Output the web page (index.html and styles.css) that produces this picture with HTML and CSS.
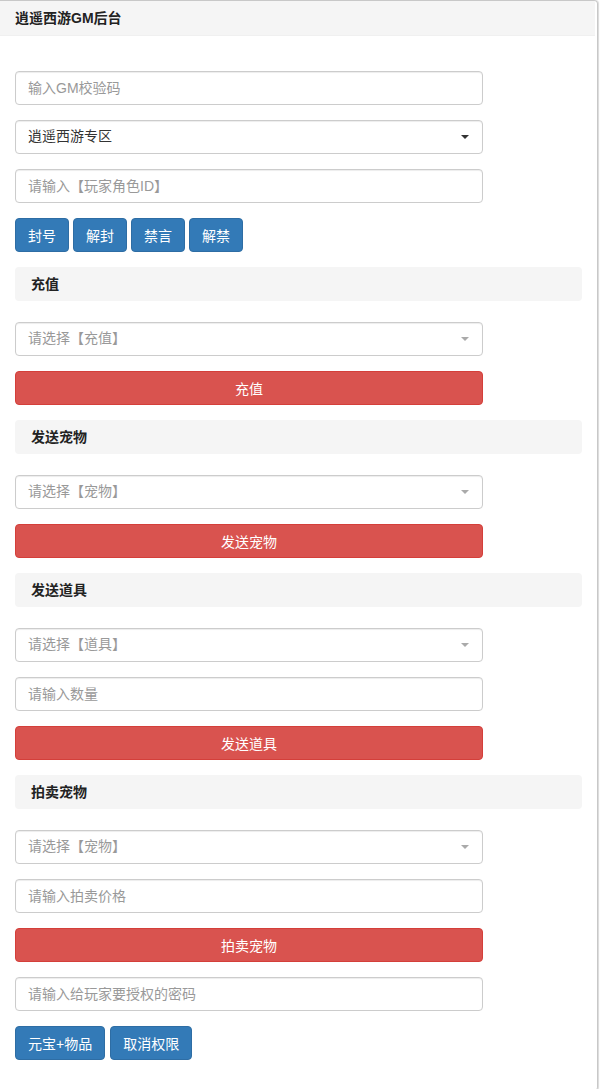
FILE: index.html
```html
<!DOCTYPE html>
<html lang="zh-CN">
<head>
  <meta charset="UTF-8">
  <meta name="viewport" content="width=device-width, initial-scale=1.0">
  <title>逍遥西游GM后台</title>
  <link rel="stylesheet" href="styles.css">
</head>
<body>
  <div class="panel">
    <div class="panel-heading">逍遥西游GM后台</div>
    <div class="panel-body">
      <form class="gm-form">
        <div class="form-group">
          <input type="text" class="form-control" placeholder="输入GM校验码">
        </div>
        <div class="form-group">
          <div class="form-control select">
            <span>逍遥西游专区</span>
            <span class="caret"></span>
          </div>
        </div>
        <div class="form-group">
          <input type="text" class="form-control" placeholder="请输入【玩家角色ID】">
        </div>
        <div class="form-group btn-row">
          <button type="button" class="btn btn-primary">封号</button>
          <button type="button" class="btn btn-primary">解封</button>
          <button type="button" class="btn btn-primary">禁言</button>
          <button type="button" class="btn btn-primary">解禁</button>
        </div>

        <div class="section-title">充值</div>
        <div class="form-group">
          <div class="form-control select empty">
            <span>请选择【充值】</span>
            <span class="caret"></span>
          </div>
        </div>
        <div class="form-group">
          <button type="button" class="btn btn-danger btn-block">充值</button>
        </div>

        <div class="section-title">发送宠物</div>
        <div class="form-group">
          <div class="form-control select empty">
            <span>请选择【宠物】</span>
            <span class="caret"></span>
          </div>
        </div>
        <div class="form-group">
          <button type="button" class="btn btn-danger btn-block">发送宠物</button>
        </div>

        <div class="section-title">发送道具</div>
        <div class="form-group">
          <div class="form-control select empty">
            <span>请选择【道具】</span>
            <span class="caret"></span>
          </div>
        </div>
        <div class="form-group">
          <input type="text" class="form-control" placeholder="请输入数量">
        </div>
        <div class="form-group">
          <button type="button" class="btn btn-danger btn-block">发送道具</button>
        </div>

        <div class="section-title">拍卖宠物</div>
        <div class="form-group">
          <div class="form-control select empty">
            <span>请选择【宠物】</span>
            <span class="caret"></span>
          </div>
        </div>
        <div class="form-group">
          <input type="text" class="form-control" placeholder="请输入拍卖价格">
        </div>
        <div class="form-group">
          <button type="button" class="btn btn-danger btn-block">拍卖宠物</button>
        </div>
        <div class="form-group">
          <input type="text" class="form-control" placeholder="请输入给玩家要授权的密码">
        </div>
        <div class="form-group btn-row wide-gap">
          <button type="button" class="btn btn-primary">元宝+物品</button>
          <button type="button" class="btn btn-primary">取消权限</button>
        </div>
      </form>
    </div>
  </div>
</body>
</html>
```

FILE: styles.css
```css
* {
  box-sizing: border-box;
}
body {
  margin: 0;
  font-family: "Liberation Sans", "Noto Sans CJK SC", sans-serif;
  font-size: 14px;
  line-height: 1.42857;
  color: #333333;
  background-color: #ffffff;
}
.panel {
  width: 599px;
  margin-left: -1px;
  min-height: 1087px;
  border: 1px solid #c8c8c8;
  border-left: none;
  border-radius: 0 4px 4px 0;
  box-shadow: 1px 0 1px rgba(0, 0, 0, 0.15);
}
.panel-heading {
  height: 35px;
  padding: 8px 15px 0 16px;
  font-weight: bold;
  color: #222222;
  background-color: #f5f5f5;
  border-bottom: 1px solid #f0f0f0;
  margin-right: 2px;
}
.panel-body {
  padding: 15px 15px 15px 16px;
}
.gm-form {
  margin-top: 20px;
}
.form-group {
  margin-bottom: 15px;
}
.btn-row {
  display: flex;
  gap: 4px;
}
.btn-row.wide-gap {
  gap: 5px;
}
.form-control {
  display: block;
  width: 468px;
  height: 34px;
  padding: 6px 12px;
  font-family: inherit;
  font-size: 14px;
  color: #555555;
  background-color: #ffffff;
  border: 1px solid #cccccc;
  border-radius: 4px;
  box-shadow: inset 0 1px 1px rgba(0, 0, 0, 0.075);
}
.form-control::placeholder {
  color: #999999;
}
.select {
  display: flex;
  align-items: center;
  justify-content: space-between;
  color: #333333;
  padding-right: 13px;
}
.select.empty {
  color: #999999;
}
.caret {
  width: 0;
  height: 0;
  border-top: 4px solid #333333;
  border-left: 4px solid transparent;
  border-right: 4px solid transparent;
}
.select.empty .caret {
  border-top-color: #aaaaaa;
}
.btn {
  display: inline-block;
  height: 34px;
  padding: 6px 12px;
  font-family: inherit;
  font-size: 14px;
  color: #ffffff;
  border: 1px solid transparent;
  border-radius: 4px;
  cursor: pointer;
}
.btn-primary {
  background-color: #337ab7;
  border-color: #2e6da4;
}
.btn-danger {
  background-color: #d9534f;
  border-color: #d43f3a;
}
.btn-block {
  display: block;
  width: 468px;
}
.section-title {
  height: 34px;
  margin-bottom: 21px;
  padding: 8px 16px 0;
  font-weight: bold;
  color: #222222;
  background-color: #f5f5f5;
  border-radius: 4px;
}
```
